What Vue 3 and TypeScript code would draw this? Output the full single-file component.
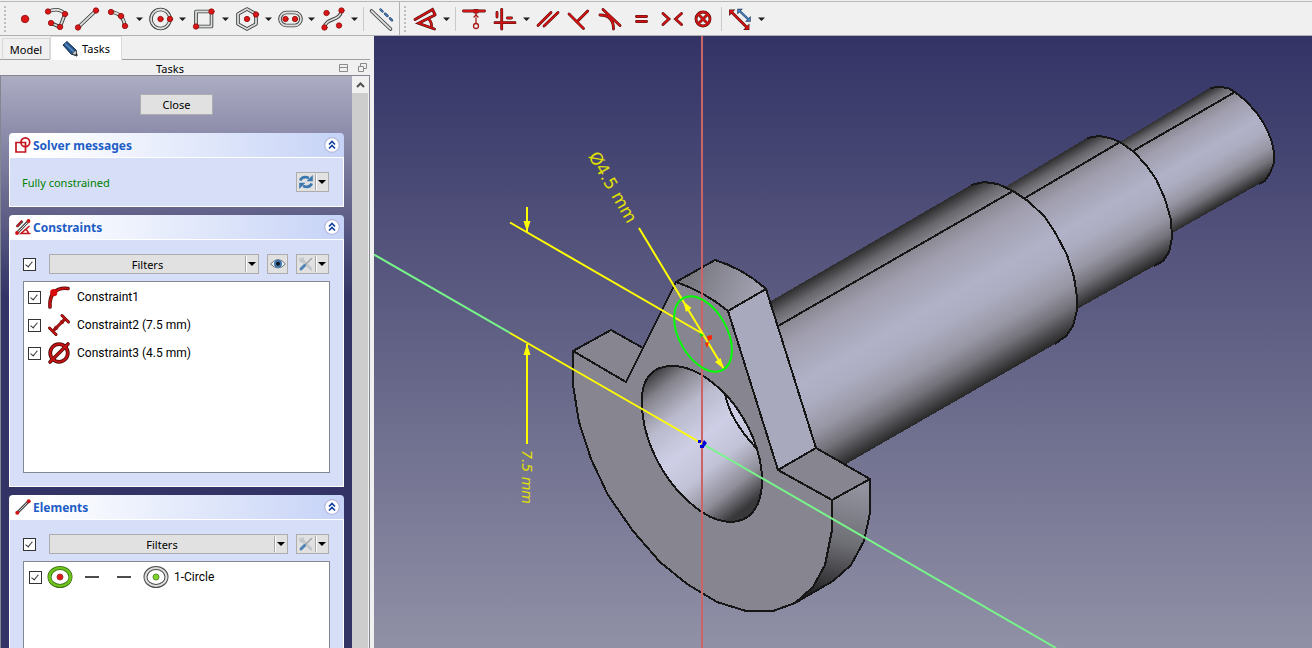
<script setup lang="ts">
import { ref } from 'vue'

interface Tool {
  label: string
  menu?: boolean
  gapBefore?: boolean
  rail?: string[]
  dots?: [number, number][]
  red?: string[]
  blue?: string[]
  thin?: string[]
}

const circle = (x: number, y: number, r: number): string =>
  `M${x - r} ${y}a${r} ${r} 0 1 0 ${2 * r} 0a${r} ${r} 0 1 0 ${-2 * r} 0`

const geometryTools: Tool[] = [
  { label: 'Point', dots: [[15, 14]] },
  { label: 'Polyline', rail: ['M7 6.5Q18 2 24 9L19 22L10 18'], dots: [[7, 6.5], [24, 9], [19, 22], [10, 18]] },
  { label: 'Line', rail: ['M6 22.5L24 5.5'], dots: [[6, 22.5], [24, 5.5]] },
  { label: 'Arc', menu: true, rail: ['M8 7Q20 8 22 21'], dots: [[8, 7], [18, 11], [22, 21]] },
  { label: 'Circle', menu: true, rail: [circle(14.5, 14, 9.5)], dots: [[14.5, 14], [24, 14]] },
  { label: 'Rectangle', menu: true, rail: ['M7 6.5H22.5V21.5H7Z'], dots: [[7, 21.5], [22.5, 6.5]] },
  { label: 'Polygon', menu: true, rail: ['M15 4L24 9V19L15 24L6 19V9Z'], dots: [[15, 14], [24, 9.5]] },
  { label: 'Slot', menu: true, rail: ['M11.5 7.5H19.5a6.5 6.5 0 0 1 0 13H11.5a6.5 6.5 0 0 1 0 -13Z'], dots: [[10.5, 14], [20, 14]] },
  { label: 'B-spline', menu: true, rail: ['M6.5 22.5C8 12 22 17 23.5 5.5'], dots: [[6.5, 22.5], [8.5, 8], [23.5, 5.5], [21, 20.5]] },
  { label: 'Toggle construction', gapBefore: true, rail: ['M4.5 6L23.5 24'], blue: ['M13.5 4.5L15.5 6.5', 'M18 8.7L20.5 11', 'M23 13.3L25 15.3'] },
]

const constraintTools: Tool[] = [
  { label: 'Dimension', menu: true, red: ['M5 14.5L22.5 4.5L25 9.5', 'M25 10L8.5 18.2L24.5 24', 'M18.5 14Q22 17 21.5 22'] },
  { label: 'Point on object', gapBefore: true, red: ['M4.5 6H25.5', 'M16 5.5H18V7H16Z'], thin: ['M17 8V11', 'M17 13V18', circle(17, 21, 2.5), 'M15 12L17 10L19 12'] },
  { label: 'Horizontal or vertical', menu: true, red: ['M11.7 4.5V24', 'M5 17.7H25', 'M7 7.5V12', 'M17.5 13H21.5'] },
  { label: 'Parallel', red: ['M5 20.5L18 7.5', 'M11 21L25 7.5'] },
  { label: 'Perpendicular', red: ['M5 9L19.5 23.5', 'M23.7 6L13 16.7'] },
  { label: 'Tangent', red: ['M8 4.5L25 20.5', 'M5 10Q18.5 10 18.5 24'] },
  { label: 'Equal', red: ['M10.5 11.5H20.5', 'M10.5 16.5H20.5'] },
  { label: 'Symmetric', red: ['M6 8.5L12 14L6 19.5', 'M24.5 8.5L18.5 14L24.5 19.5'] },
  { label: 'Block', red: [circle(15, 14, 7), 'M10.5 9.5L19.5 18.5', 'M19.5 9.5L10.5 18.5'] },
  { label: 'Toggle driving', menu: true, gapBefore: true, red: ['M6 6.5L22.5 23', 'M5.5 7.5V6H7Z', 'M23 22V23.5H21.5Z'], blue: ['M14 5.5L24 15', 'M13.5 6.5V5H15Z', 'M24.5 14V15.5H23Z'] },
]

const toolbars = [
  { label: 'Geometries', tools: geometryTools },
  { label: 'Constraints', tools: constraintTools },
]

const constraints = ref([
  { name: 'Constraint1', kind: 'tangent', on: true },
  { name: 'Constraint2 (7.5 mm)', kind: 'distance', on: true },
  { name: 'Constraint3 (4.5 mm)', kind: 'diameter', on: true },
])
const allConstraints = ref(true)
const allElements = ref(true)
const circleVisible = ref(true)
</script>

<template>
  <div class="window">
    <header class="toolbars">
      <div v-for="bar in toolbars" :key="bar.label" class="toolbar" role="toolbar" :aria-label="bar.label">
        <span class="grip"></span>
        <template v-for="tool in bar.tools" :key="tool.label">
          <span v-if="tool.gapBefore" class="divider"></span>
          <button type="button" class="tool" :aria-label="tool.label">
            <svg width="31" height="28" viewBox="0 0 31 28" fill="none" stroke-linecap="round">
              <g v-for="d in tool.rail" :key="d" stroke-linejoin="round">
                <path :d="d" stroke="#3a3d3c" stroke-width="3.6" />
                <path :d="d" stroke="#dcdedb" stroke-width="1.8" />
              </g>
              <path v-for="d in tool.red" :key="'o' + d" :d="d" stroke="#4a0a0a" stroke-width="2.8" />
              <path v-for="d in tool.red" :key="d" :d="d" stroke="#d01414" stroke-width="1.8" />
              <path v-for="d in tool.thin" :key="d" :d="d" stroke="#a81818" stroke-width="1.3" />
              <path v-for="d in tool.blue" :key="'o' + d" :d="d" stroke="#1b3a63" stroke-width="2.4" />
              <path v-for="d in tool.blue" :key="d" :d="d" stroke="#4a80bd" stroke-width="1.2" />
              <circle v-for="p in tool.dots" :key="p.join()" :cx="p[0]" :cy="p[1]" :r="tool.rail ? 2.7 : 3.7" fill="#dc1616" stroke="#8c1010" stroke-width="0.8" />
            </svg>
            <svg v-if="tool.menu" width="12" height="28" viewBox="0 0 12 28"><path d="M2 12.500H9L5.500 16Z" fill="#1c1c1c" /></svg>
          </button>
        </template>
      </div>
    </header>

    <main class="workspace">
      <aside class="side">
        <nav class="tabs" role="tablist">
          <button type="button" class="tab" role="tab" aria-selected="false">Model</button>
          <button type="button" class="tab active" role="tab" aria-selected="true">
            <svg width="16" height="16" viewBox="0 0 16 16"><path d="M1 4L5 .5L14 9L15 15L9 13Z" fill="#27588f" stroke="#16304f" /><path d="M3 2.5L12 11" stroke="#5c8fc4" stroke-width="1.5" /><path d="M10 12.5L14 9L15 15Z" fill="#c8ced2" stroke="#333" stroke-width=".7" /><path d="M13 13L15 12.5V15Z" fill="#222" /></svg>
            <span>Tasks</span>
          </button>
        </nav>
        <div class="dock">
          <span>Tasks</span>
          <div class="dock-buttons">
            <button type="button" aria-label="Collapse"><svg width="9" height="9" viewBox="0 0 9 9"><path d="M.5 1.5H8.5V8.5H.5ZM.5 4.5H8.5" fill="none" stroke="#8a8a8a" /></svg></button>
            <button type="button" aria-label="Float"><svg width="9" height="9" viewBox="0 0 9 9"><path d="M.5 3.5H5.5V8.5H.5ZM2.5 3.5V.5H8.5V5.5H5.5" fill="none" stroke="#8a8a8a" /></svg></button>
          </div>
        </div>

        <div class="task-view">
          <div class="task-list">
            <button type="button" class="close">Close</button>

            <section class="group">
              <header class="group-head">
                <svg width="16" height="16" viewBox="0 0 16 16" fill="none" stroke="#c4141c" stroke-width="1.7"><path d="M1 5.5H10.5V15H1Z" /><circle cx="10.3" cy="5.3" r="4.4" /></svg>
                <h2>Solver messages</h2>
                <button type="button" class="fold" aria-label="Collapse solver messages"><svg width="16" height="16" viewBox="0 0 16 16"><circle cx="8" cy="8" r="7.3" fill="#fff" stroke="#b4bbdc" stroke-width="1.3" /><path d="M5 7.5L8 4.5L11 7.5M5 11.5L8 8.5L11 11.5" fill="none" stroke="#123e9c" stroke-width="1.6" /></svg></button>
              </header>
              <div class="group-body short">
                <div class="controls">
                  <p class="status">Fully constrained</p>
                  <button type="button" class="split" aria-label="Update">
                    <svg width="18" height="16" viewBox="0 0 18 16" fill="none" stroke="#3b78b0" stroke-width="2.8"><path d="M3.2 6.5Q5.5 1.5 12 4M14.8 9.5Q12.5 14.5 6 12" /><path d="M15.8 1V7.3H9.5ZM2.2 15V8.7H8.5Z" fill="#3b78b0" stroke="none" /></svg>
                    <i></i>
                  </button>
                </div>
              </div>
            </section>

            <section class="group">
              <header class="group-head">
                <svg width="16" height="16" viewBox="0 0 16 16" fill="none"><path d="M2 7.5L7.5 2M2 14L14 1.5" stroke="#555" stroke-width="3" /><path d="M3 13L13 3" stroke="#ddd" stroke-width="1" /><path d="M1.5 8L7 1.5M14.5 7L6 14.5H15.5M10.5 10.5Q13 11.5 13 14" stroke="#c4141c" stroke-width="1.6" /><circle cx="2" cy="14" r="1.9" fill="#d01414" /><circle cx="13.5" cy="2" r="1.9" fill="#d01414" /></svg>
                <h2>Constraints</h2>
                <button type="button" class="fold" aria-label="Collapse constraints"><svg width="16" height="16" viewBox="0 0 16 16"><circle cx="8" cy="8" r="7.3" fill="#fff" stroke="#b4bbdc" stroke-width="1.3" /><path d="M5 7.5L8 4.5L11 7.5M5 11.5L8 8.5L11 11.5" fill="none" stroke="#123e9c" stroke-width="1.6" /></svg></button>
              </header>
              <div class="group-body">
                <div class="controls">
                  <input v-model="allConstraints" type="checkbox" class="check" aria-label="Show all constraints" />
                  <button type="button" class="split filters"><span>Filters</span><i></i></button>
                  <button type="button" class="eye" aria-label="Toggle visibility"><svg width="16" height="12" viewBox="0 0 16 12"><path d="M.5 6Q8-3 15.5 6Q8 14 .5 6Z" fill="#edf0f2" stroke="#6c7780" /><circle cx="8" cy="5.7" r="4" fill="#3f74aa" /><circle cx="8" cy="5.7" r="2" fill="#10161c" /></svg></button>
                  <button type="button" class="split" aria-label="Settings">
                    <svg width="18" height="16" viewBox="-1 0 18 16" fill="none" stroke-linecap="round"><path d="M4 4L13 13" stroke="#c3c7ca" stroke-width="3" /><path d="M2 3Q2 6 5 5.5Q6 4 4.5 2" stroke="#c3c7ca" stroke-width="2" /><path d="M13.5 2.5L7 9" stroke="#a3a9ad" stroke-width="1.6" /><path d="M6.5 9.5L3 13" stroke="#4f83b6" stroke-width="3" /></svg>
                    <i></i>
                  </button>
                </div>
                <ul class="list">
                  <li v-for="c in constraints" :key="c.name">
                    <label class="item">
                      <input v-model="c.on" type="checkbox" class="check" />
                      <svg width="24" height="24" viewBox="0 0 24 24" fill="none" stroke-linecap="round">
                        <template v-if="c.kind === 'tangent'">
                          <path d="M3 22C2 10 8 2 21 3.5" stroke="#4a0a0a" stroke-width="3.6" />
                          <path d="M3 22C2 10 8 2 21 3.5" stroke="#c41212" stroke-width="2.2" />
                          <circle cx="6.7" cy="7.7" r="3.6" fill="#d80c0c" />
                        </template>
                        <template v-else-if="c.kind === 'distance'">
                          <path d="M15 2.5L21.5 9M2.5 15L9 21.5M6 18L18 6" stroke="#4a0a0a" stroke-width="3" />
                          <path d="M15 2.5L21.5 9M2.5 15L9 21.5M6 18L18 6" stroke="#c41212" stroke-width="1.8" />
                          <path d="M18.5 5.5L12.5 8L16 11.5ZM5.5 18.5L11.5 16L8 12.5Z" fill="#a01010" />
                        </template>
                        <template v-else>
                          <circle cx="12" cy="12" r="8.8" stroke="#4a0a0a" stroke-width="3.8" />
                          <path d="M3 21L21 3" stroke="#4a0a0a" stroke-width="3.6" />
                          <circle cx="12" cy="12" r="8.8" stroke="#c41212" stroke-width="2.2" />
                          <path d="M3 21L21 3" stroke="#c41212" stroke-width="2.2" />
                        </template>
                      </svg>
                      <span>{{ c.name }}</span>
                    </label>
                  </li>
                </ul>
              </div>
            </section>

            <section class="group">
              <header class="group-head">
                <svg width="16" height="16" viewBox="0 0 16 16" fill="none"><path d="M2 14L14 2" stroke="#444" stroke-width="2.8" /><path d="M2 14L14 2" stroke="#ccc" stroke-width="1" /><circle cx="2.3" cy="13.7" r="2" fill="#d01414" /><circle cx="13.7" cy="2.3" r="2" fill="#d01414" /></svg>
                <h2>Elements</h2>
                <button type="button" class="fold" aria-label="Collapse elements"><svg width="16" height="16" viewBox="0 0 16 16"><circle cx="8" cy="8" r="7.3" fill="#fff" stroke="#b4bbdc" stroke-width="1.3" /><path d="M5 7.5L8 4.5L11 7.5M5 11.5L8 8.5L11 11.5" fill="none" stroke="#123e9c" stroke-width="1.6" /></svg></button>
              </header>
              <div class="group-body">
                <div class="controls">
                  <input v-model="allElements" type="checkbox" class="check" aria-label="Show all elements" />
                  <button type="button" class="split filters"><span>Filters</span><i></i></button>
                  <button type="button" class="split" aria-label="Settings">
                    <svg width="18" height="16" viewBox="-1 0 18 16" fill="none" stroke-linecap="round"><path d="M4 4L13 13" stroke="#c3c7ca" stroke-width="3" /><path d="M2 3Q2 6 5 5.5Q6 4 4.5 2" stroke="#c3c7ca" stroke-width="2" /><path d="M13.5 2.5L7 9" stroke="#a3a9ad" stroke-width="1.6" /><path d="M6.5 9.5L3 13" stroke="#4f83b6" stroke-width="3" /></svg>
                    <i></i>
                  </button>
                </div>
                <ul class="list">
                  <li>
                    <label class="item element">
                      <input v-model="circleVisible" type="checkbox" class="check" />
                      <svg width="122" height="24" viewBox="0 0 122 24" fill="none">
                        <ellipse cx="13" cy="12" rx="10.5" ry="9" stroke="#3c6b12" stroke-width="4" />
                        <ellipse cx="13" cy="12" rx="10.5" ry="9" stroke="#6cc41c" stroke-width="2.6" />
                        <circle cx="13" cy="12" r="3" fill="#dc1616" stroke="#a33" />
                        <path d="M38 12H52M70 12H84" stroke="#4c4c4c" stroke-width="2" />
                        <ellipse cx="109" cy="12" rx="10.5" ry="9" stroke="#4a4a4a" stroke-width="4" />
                        <ellipse cx="109" cy="12" rx="10.5" ry="9" stroke="#dcdcdc" stroke-width="2" />
                        <circle cx="109" cy="12" r="3" fill="#7fd62a" stroke="#5a8a30" />
                      </svg>
                      <span>1-Circle</span>
                    </label>
                  </li>
                </ul>
              </div>
            </section>
          </div>
          <div class="scrollbar">
            <button type="button" aria-label="Scroll up"><svg width="9" height="6" viewBox="0 0 9 6"><path d="M1 5L4.5 1.5L8 5" fill="none" stroke="#505050" stroke-width="2" /></svg></button>
          </div>
        </div>
      </aside>

      <section class="view" aria-label="3D view">
        <svg class="scene" viewBox="374 36 938 612" preserveAspectRatio="xMinYMin slice">
          <defs>
            <linearGradient id="shaft">
              <stop offset="0" stop-color="#2a2a2b" />
              <stop offset=".08" stop-color="#66666b" />
              <stop offset=".16" stop-color="#8d8b95" />
              <stop offset=".25" stop-color="#a09eae" />
              <stop offset=".48" stop-color="#b1b2c8" />
              <stop offset=".6" stop-color="#acadc1" />
              <stop offset=".75" stop-color="#9897a5" />
              <stop offset=".86" stop-color="#74737b" />
              <stop offset="1" stop-color="#262626" />
            </linearGradient>
            <linearGradient id="shaftLarge" href="#shaft" gradientUnits="userSpaceOnUse" x1="971" y1="185" x2="1061" y2="341" />
            <linearGradient id="shaftMedium" href="#shaft" gradientUnits="userSpaceOnUse" x1="1087" y1="138" x2="1159" y2="263" />
            <linearGradient id="shaftSmall" href="#shaft" gradientUnits="userSpaceOnUse" x1="1210" y1="88" x2="1264" y2="181" />
            <linearGradient id="bore" gradientUnits="userSpaceOnUse" x1="652" y1="372" x2="754" y2="501">
              <stop offset="0" stop-color="#3a3a3c" />
              <stop offset=".12" stop-color="#84838c" />
              <stop offset=".3" stop-color="#babacd" />
              <stop offset=".5" stop-color="#cecee6" />
              <stop offset=".68" stop-color="#c2c2d7" />
              <stop offset=".86" stop-color="#8e8d98" />
              <stop offset="1" stop-color="#38383a" />
            </linearGradient>
            <linearGradient id="tip" gradientUnits="userSpaceOnUse" x1="685" y1="272" x2="750" y2="302">
              <stop offset="0" stop-color="#74747c" />
              <stop offset="1" stop-color="#a09fae" />
            </linearGradient>
            <linearGradient id="rim" gradientUnits="userSpaceOnUse" x1="850" y1="485" x2="822" y2="597">
              <stop offset="0" stop-color="#93939f" />
              <stop offset=".5" stop-color="#6e6e75" />
              <stop offset="1" stop-color="#222223" />
            </linearGradient>
          </defs>

          <g class="edges">
            <path class="face" fill="url(#shaftSmall)" d="M1110 148L1210 88L1219 87L1228 88L1235 92L1246 101L1256 112L1263 122L1268 132L1272 142L1274 152L1274 163L1270 173L1265 181L1259 184L1165 237Z" />
            <path d="M1210 88L1219 87L1228 88L1235 92L1246 101L1256 112L1263 122L1268 132L1272 142L1274 152L1274 163L1270 173L1265 181L1259 184M1133 151L1235 92" />
            <path class="face" fill="url(#shaftMedium)" d="M1000 190L1087 138L1099 136L1110 138L1120 142L1134 152L1146 165L1156 179L1165 199L1171 220L1172 238L1169 252L1163 261L1154 266L1070 313Z" />
            <path d="M1087 138L1099 136L1110 138L1120 142L1134 152L1146 165L1156 179L1165 199L1171 220L1172 238L1169 252L1163 261L1154 266M1025 198L1120 142" />
            <path class="face" fill="url(#shaftLarge)" d="M765 304.5L971 185L984 182L998 184L1013 191L1028 201L1045 217L1056 234L1067 255L1074 277L1077 297L1077 310L1073 326L1066 336L1055 344L846 464L800 460Z" />
            <path d="M971 185L984 182L998 184L1013 191L1028 201L1045 217L1056 234L1067 255L1074 277L1077 297L1077 310L1073 326L1066 336L1055 344M778 326L1013 191" />

            <path fill="url(#rim)" d="M832 500L870 479V513L864 541L851 565L833 581L795 603L813 586L825 565L832 530Z" />
            <path fill="#868590" d="M778 470L816 448L870 479L832 500Z" />
            <path fill="#868590" d="M573 351L611 330L643 348L626 382Z" />
            <path fill="#a9a9be" d="M728 311L766 289L816 448L778 470Z" />
            <path fill="url(#tip)" d="M676 282L715 260Q744 269 766 289L728 311Q705 292 676 282Z" />
            <path fill="#868590" d="M573 351L626 382L676 282Q705 292 728 311L778 470L832 500V530L825 565L813 587L795 603L773 611H746L717 602L687 584L660 562L633 531L608 495L591 459L579 422L573 385Z" />
            <path fill="url(#bore)" d="M642 403C641 379 652 366 672 366C693 366 711 379 729 398C750 423 762 454 762 480C762 507 750 522 730 522C710 521 694 508 677 490C655 464 642 432 642 403Z" />
            <path d="M725 393Q729 419 757 449" />
          </g>

          <path d="M702 36V648" stroke="#cd6366" stroke-width="2" />
          <path d="M374 254.5L510 333M702 443.5L1056 648" stroke="#78f58a" stroke-width="2" />
          <g class="dimension">
            <path d="M510 333L702 443.5M510 222.5L704 334.5M527 207V232M527 344V444M639 228L724 369" />
            <path class="head" d="M527 232L523.5 221H530.5ZM527 344L523.5 355H530.5ZM683 301L691.5 308L686 312ZM724 369L715 362L720.5 358Z" />
            <text class="diameter" transform="translate(588 156) rotate(60)">Ø4.5 mm</text>
            <text class="distance" transform="translate(522 450) rotate(90)">7.5 mm</text>
          </g>
          <ellipse class="sketch" rx="41" ry="24" transform="translate(703 334) rotate(61)" />
          <path d="M699 333L704 335L701 337Z" fill="#00e000" />
          <path d="M707 336L712 335V339L708 341ZM705 343L709 342L707 348Z" fill="#ff2800" />
          <path d="M698 440H701V443H698ZM700 445H704V448H700ZM704 440L707 443L704 447L702 444Z" fill="#0000dc" />
        </svg>
      </section>
    </main>
  </div>
</template>

<style>
body {
  margin: 0;
  overflow: hidden;
}
</style>

<style scoped>
.window {
  display: flex;
  flex-direction: column;
  height: 100vh;
  background: #f0f0f0;
  color: #000;
  font: 11px/16px "Noto Sans", "Open Sans", sans-serif;
}
button {
  padding: 0;
  border: 0;
  background: none;
  color: inherit;
  font: inherit;
}
svg {
  display: block;
  flex: none;
}
.toolbars {
  display: flex;
  flex: none;
  padding-top: 1px;
}
.toolbar {
  display: flex;
  align-items: center;
  height: 33px;
  border-top: 1px solid #b8b8b8;
  border-bottom: 1px solid #b0b0b0;
}
.toolbar:first-child {
  padding-right: 1px;
  border-right: 1px solid #b0b0b0;
}
.toolbar:last-child {
  flex: 1;
}
.grip {
  width: 2px;
  height: 26px;
  margin: 0 4px;
  background: repeating-linear-gradient(#bdbdbd 0 2px, transparent 2px 4px);
}
.divider {
  width: 1px;
  height: 24px;
  margin: 0 3px 0 2px;
  background: #c9c9c9;
}
.tool {
  display: flex;
}
.workspace {
  display: flex;
  flex: 1;
  min-height: 0;
}
.side {
  display: flex;
  flex: none;
  flex-direction: column;
  width: 370px;
  margin-right: 4px;
}
.tabs {
  display: flex;
  align-items: flex-end;
  height: 24px;
  padding-left: 2px;
  box-shadow: inset 0 -1px #a0a0a0;
}
.tab {
  display: flex;
  align-items: center;
  justify-content: center;
  gap: 4px;
  width: 48px;
  height: 22px;
  padding-top: 2px;
  border: 1px solid #d9d9d9;
  border-bottom-color: #a0a0a0;
}
.tab.active {
  width: 72px;
  height: 24px;
  border-bottom-color: #fff;
  background: #fff;
}
.dock {
  position: relative;
  flex: none;
  height: 15px;
  padding-right: 30px;
  line-height: 17px;
  text-align: center;
}
.dock-buttons {
  position: absolute;
  top: 3px;
  right: 3px;
  display: flex;
  gap: 10px;
}
.task-view {
  display: flex;
  flex: 1;
  min-height: 0;
  border: 1px solid #828790;
  border-bottom: 0;
}
.task-list {
  display: flex;
  flex: 1;
  flex-direction: column;
  gap: 8px;
  overflow: hidden;
  padding: 18px 8px 0;
  background: linear-gradient(#acacc3, #333366 220px);
}
.close {
  flex: none;
  align-self: center;
  width: 73px;
  height: 21px;
  margin-bottom: 10px;
  padding-top: 1px;
  border: 1px solid #adadad;
  background: #e1e1e1;
}
.group {
  flex: none;
}
.group-head {
  display: flex;
  align-items: center;
  height: 24px;
  padding: 0 4px 0 6px;
  border-bottom: 1px solid #fff;
  border-radius: 4px 4px 0 0;
  background: linear-gradient(90deg, #fff 10%, #c6d3f7);
}
h2 {
  flex: 1;
  margin: 0 0 0 2px;
  padding-top: 2px;
  color: #215dc6;
  font-size: 12px;
  line-height: 16px;
}
.group-body {
  padding: 14px 13px 13px;
  border: 1px solid #fff;
  border-top: 0;
  background: #d6dff7;
}
.group-body.short {
  padding-bottom: 14px;
}
.controls {
  display: flex;
  align-items: center;
  height: 20px;
  margin-right: 1px;
}
.status {
  flex: 1;
  margin: 0 0 0 -1px;
  padding-top: 2px;
  color: #008000;
}
.check {
  position: relative;
  flex: none;
  width: 13px;
  height: 13px;
  margin: 0;
  border: 1px solid #333;
  background: #fff;
  appearance: none;
}
.check:checked::after {
  position: absolute;
  top: 1px;
  left: 3px;
  width: 3px;
  height: 6px;
  border: solid #333;
  border-width: 0 1px 1px 0;
  content: "";
  transform: rotate(40deg);
}
.split,
.eye {
  display: flex;
  align-items: center;
  height: 20px;
  border: 1px solid #adadad;
  background: #e1e1e1;
}
.split span {
  flex: 1;
  padding-top: 2px;
}
.split i {
  display: flex;
  align-items: center;
  justify-content: center;
  width: 12px;
  height: 16px;
  border-left: 1px solid #a8a8a8;
  box-shadow: inset 1px 0 #fff;
}
.split i::after {
  border: 4px solid transparent;
  border-top-color: #000;
  border-bottom: 0;
  content: "";
}
.filters {
  flex: 1;
  margin: 0 8px 0 13px;
}
.eye {
  justify-content: center;
  width: 21px;
  margin-right: 8px;
}
.list {
  box-sizing: border-box;
  height: 192px;
  margin: 7px 0 0;
  padding: 1px 4px;
  border: 1px solid #828790;
  background: #fff;
  font-family: Roboto, "Noto Sans", sans-serif;
  font-size: 12px;
  list-style: none;
}
.item {
  display: flex;
  align-items: center;
  gap: 6px;
  height: 28px;
}
.item.element {
  padding-left: 1px;
  gap: 5px;
}
.scrollbar {
  flex: none;
  width: 16px;
  margin-right: 1px;
  background: #cdcdcd;
}
.scrollbar button {
  display: flex;
  align-items: center;
  justify-content: center;
  width: 100%;
  height: 17px;
  background: #f0f0f0;
}
.view {
  flex: 1;
  min-width: 0;
  background: linear-gradient(#333366, #9090a6);
}
.scene {
  width: 100%;
  height: 100%;
}
.edges path {
  stroke: #161616;
  stroke-width: 2px;
  stroke-linejoin: round;
  shape-rendering: crispEdges;
}
.edges path:not([fill]) {
  fill: none;
}
.edges .face {
  stroke: none;
}
.dimension {
  fill: none;
  stroke: #ff0;
  stroke-width: 2px;
}
.dimension .head {
  fill: #ff0;
  stroke: none;
}
.dimension text {
  fill: #e2e000;
  stroke: none;
  font-family: "DejaVu Sans", sans-serif;
}
.dimension .diameter {
  font-size: 17px;
}
.dimension .distance {
  font-size: 14px;
  font-style: italic;
}
.sketch {
  fill: none;
  stroke: #0f0;
  stroke-width: 2px;
}
</style>
